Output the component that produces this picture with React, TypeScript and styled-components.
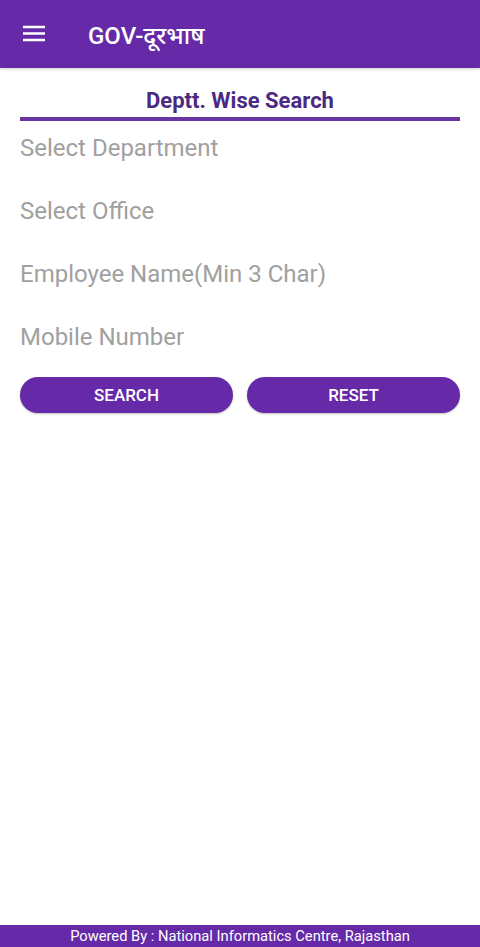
import React from 'react';
import styled, { createGlobalStyle } from 'styled-components';

const GlobalStyle = createGlobalStyle`
  html, body {
    margin: 0;
    padding: 0;
    background: #ffffff;
    font-family: Roboto, 'Noto Sans', Arial, sans-serif;
  }
  #root {
    min-height: 100vh;
  }
`;

const Page = styled.div`
  height: 947px;
  display: flex;
  flex-direction: column;
  background: #ffffff;
`;

const AppBar = styled.header`
  height: 68px;
  flex-shrink: 0;
  display: flex;
  align-items: center;
  padding: 0 0 0 21px;
  background: #6629a8;
  box-shadow: 0 1px 3px rgba(0, 0, 0, 0.2);
`;

const MenuButton = styled.button`
  width: 26px;
  height: 26px;
  padding: 0;
  border: none;
  background: transparent;
  display: flex;
  align-items: center;
  justify-content: center;
`;

const Title = styled.h1`
  margin: 0 0 0 41px;
  color: #ffffff;
  font-size: 24px;
  font-weight: 500;
  font-family: Roboto, 'Noto Sans', 'Noto Sans Devanagari', sans-serif;
`;

const Content = styled.main`
  flex: 1;
  padding: 0 20px;
`;

const SectionTitle = styled.div`
  margin-top: 19px;
  padding-bottom: 2px;
  text-align: center;
  font-size: 22px;
  line-height: 28px;
  font-weight: 700;
  color: #4b2a82;
  border-bottom: 4px solid #6835a2;
`;

const Fields = styled.div`
  display: flex;
  flex-direction: column;
  margin-top: -5px;
`;

const Field = styled.div`
  height: 63px;
  display: flex;
  align-items: center;
  font-size: 24px;
  color: #a0a0a0;
`;

const ButtonRow = styled.div`
  display: grid;
  grid-template-columns: 1fr 1fr;
  gap: 14px;
  margin-top: 9px;
`;

const PillButton = styled.button`
  height: 36px;
  border: none;
  border-radius: 18px;
  background: #6629a8;
  color: #ffffff;
  font-family: Roboto, Arial, sans-serif;
  font-size: 17px;
  font-weight: 500;
  box-shadow: 0 1px 2px rgba(0, 0, 0, 0.25);
`;

const Footer = styled.footer`
  height: 22px;
  flex-shrink: 0;
  display: flex;
  align-items: center;
  justify-content: center;
  background: #6629a8;
  color: #ffffff;
  font-size: 14.7px;
`;

const fields = [
  'Select Department',
  'Select Office',
  'Employee Name(Min 3 Char)',
  'Mobile Number',
];

export default function App() {
  return (
    <>
      <GlobalStyle />
      <Page>
        <AppBar>
          <MenuButton aria-label="menu">
            <svg width="24" height="24" viewBox="0 0 24 24">
              <path d="M1 5h22M1 11.5h22M1 18h22" stroke="#fff" strokeWidth="2.6" />
            </svg>
          </MenuButton>
          <Title>GOV-दूरभाष</Title>
        </AppBar>
        <Content>
          <SectionTitle>Deptt. Wise Search</SectionTitle>
          <Fields>
            {fields.map((f) => (
              <Field key={f}>{f}</Field>
            ))}
          </Fields>
          <ButtonRow>
            <PillButton>SEARCH</PillButton>
            <PillButton>RESET</PillButton>
          </ButtonRow>
        </Content>
        <Footer>Powered By : National Informatics Centre, Rajasthan</Footer>
      </Page>
    </>
  );
}
